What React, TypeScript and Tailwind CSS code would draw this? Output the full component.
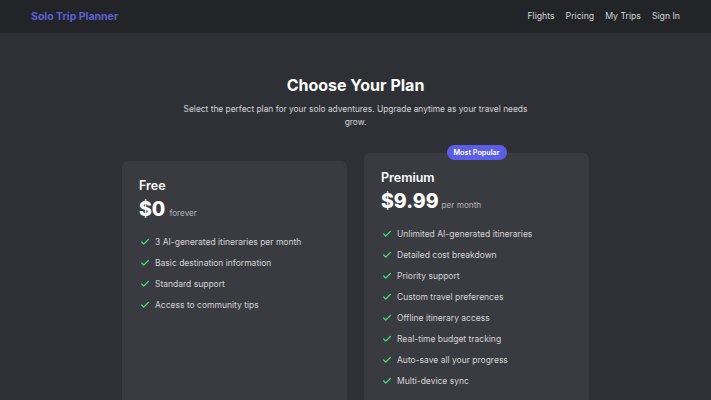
import React from "react";

const Check = () => (
  <svg width="10" height="10" viewBox="0 0 24 24" fill="none" stroke="#4ade80" strokeWidth="3" strokeLinecap="round" strokeLinejoin="round" className="shrink-0">
    <path d="M20 6 9 17l-5-5" />
  </svg>
);

const Feature = ({ text }: { text: string }) => (
  <li className="flex items-center gap-[5px] h-[14px] pl-[1px]">
    <Check />
    <span className="text-[8.5px] leading-[14px] text-[#d4d4d8]">{text}</span>
  </li>
);

export default function App() {
  const free = [
    "3 AI-generated itineraries per month",
    "Basic destination information",
    "Standard support",
    "Access to community tips",
  ];
  const premium = [
    "Unlimited AI-generated itineraries",
    "Detailed cost breakdown",
    "Priority support",
    "Custom travel preferences",
    "Offline itinerary access",
    "Real-time budget tracking",
    "Auto-save all your progress",
    "Multi-device sync",
  ];
  return (
    <div className="min-h-[400px] h-[400px] overflow-hidden bg-[#2f3035] text-white" style={{ fontFamily: "Inter, 'Noto Sans', sans-serif" }}>
      <nav className="h-[33px] bg-[#232428] flex items-center justify-between px-[31px] pt-[1px]">
        <span className="text-[10.5px] font-bold text-[#5b60d6]">Solo Trip Planner</span>
        <div className="flex items-center gap-[11px] text-[8.7px] text-[#d4d4d8]">
          <span>Flights</span>
          <span>Pricing</span>
          <span>My Trips</span>
          <span>Sign In</span>
        </div>
      </nav>
      <main className="flex flex-col items-center pt-[40px]">
        <h1 className="text-[16px] leading-[24px] font-bold">Choose Your Plan</h1>
        <p className="mt-[6px] max-w-[360px] text-center text-[8.4px] leading-[13px] text-[#d1d5db]">
          Select the perfect plan for your solo adventures. Upgrade anytime as your travel needs grow.
        </p>
        <div className="mt-[32px] flex gap-[17px]">
          <div className="w-[225px] h-[300px] rounded-[6px] bg-[#3a3b40] px-[17px] pt-[16px]">
            <h2 className="text-[12.5px] leading-[18px] font-semibold">Free</h2>
            <div className="mt-[2px] flex items-baseline gap-[4px]">
              <span className="text-[19.5px] leading-[24px] font-extrabold">$0</span>
              <span className="text-[8.2px] text-[#b4b4bb]">forever</span>
            </div>
            <ul className="mt-[14px] flex flex-col gap-[7px]">
              {free.map((f) => (
                <Feature key={f} text={f} />
              ))}
            </ul>
          </div>
          <div className="relative w-[225px] h-[300px] -translate-y-[8px] rounded-[6px] bg-[#3a3b40] px-[17px] pt-[16px]">
            <span className="absolute left-1/2 -translate-x-1/2 -top-[8px] h-[15px] px-[7px] rounded-full bg-[#5b5fe8] text-[7.2px] font-semibold leading-[15px] whitespace-nowrap">
              Most Popular
            </span>
            <h2 className="text-[12.5px] leading-[18px] font-semibold">Premium</h2>
            <div className="mt-[2px] flex items-baseline gap-[3px]">
              <span className="text-[19.5px] leading-[24px] font-extrabold">$9.99</span>
              <span className="text-[8.2px] text-[#b4b4bb]">per month</span>
            </div>
            <ul className="mt-[14px] flex flex-col gap-[7px]">
              {premium.map((f) => (
                <Feature key={f} text={f} />
              ))}
            </ul>
          </div>
        </div>
      </main>
    </div>
  );
}
